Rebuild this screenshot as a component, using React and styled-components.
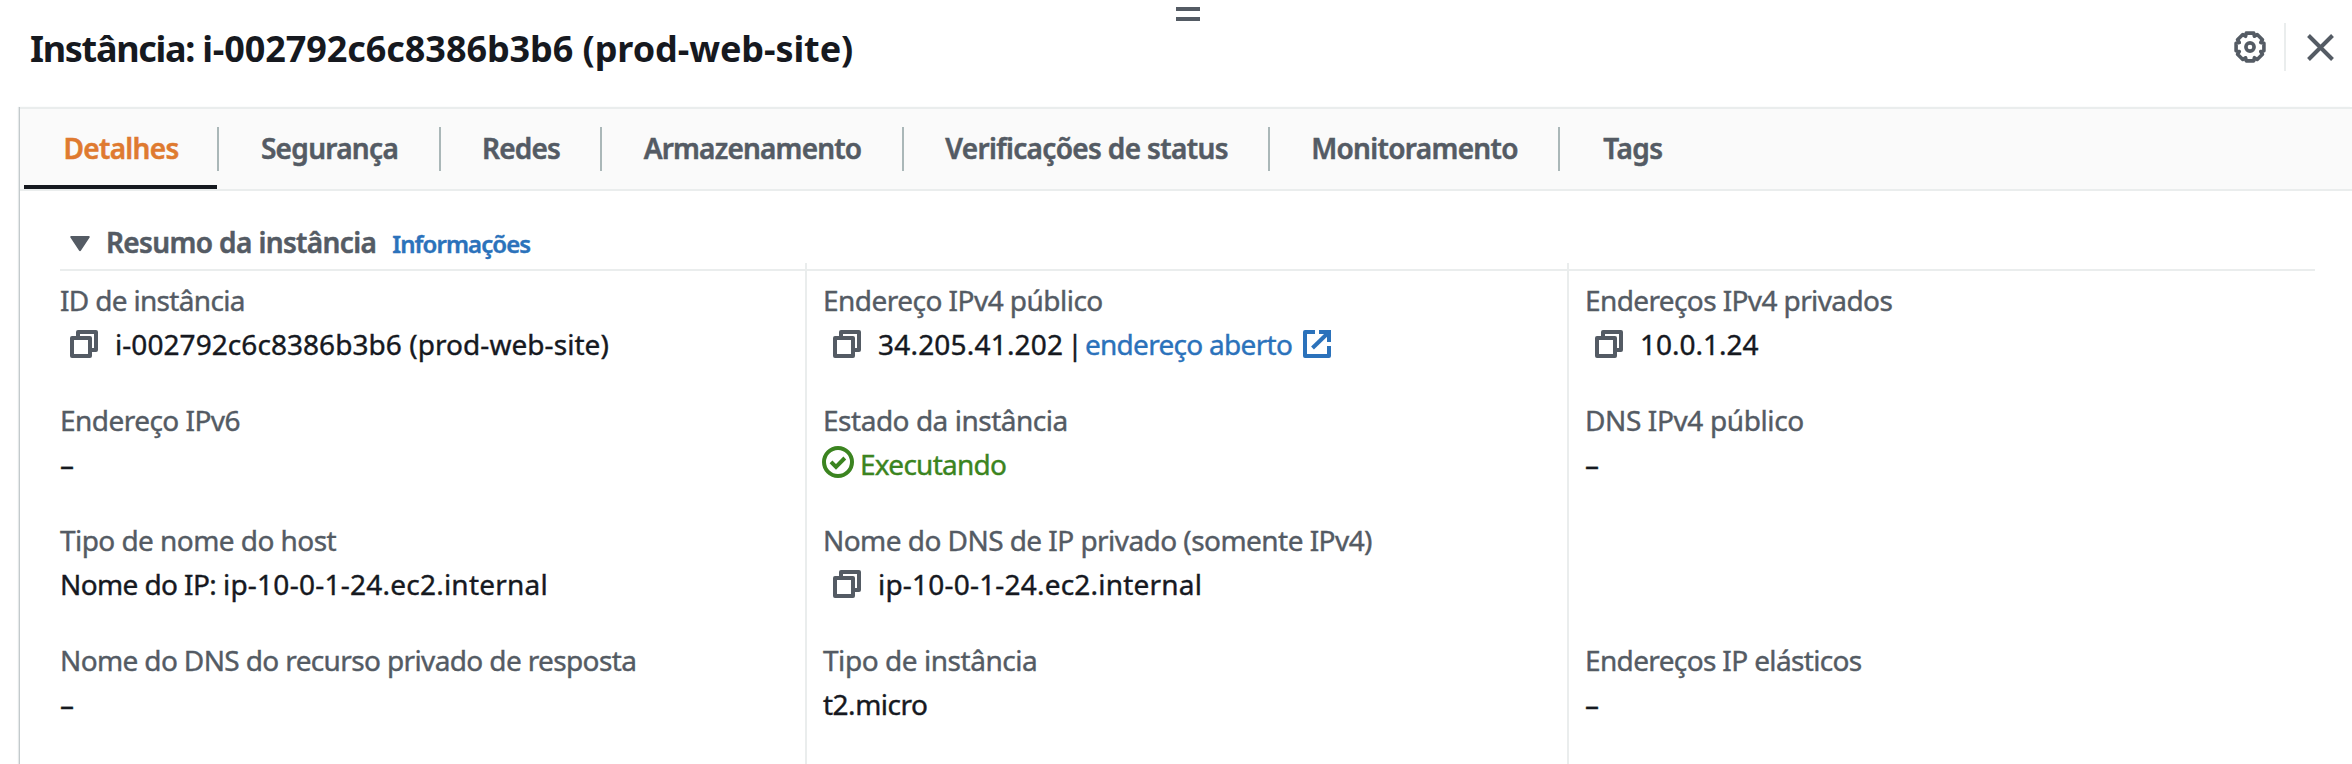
import React from 'react';
import styled, { createGlobalStyle } from 'styled-components';

const color = {
  ink: '#16191f',
  muted: '#545b64',
  link: '#2b72bb',
  accent: '#df7a30',
  success: '#3b8420',
  line: '#eaeded',
  separator: '#aab7b8',
  bar: '#fafafa',
};

const GlobalStyle = createGlobalStyle`
  * { box-sizing: border-box; }
  body {
    margin: 0;
    background: #fff;
    color: ${color.ink};
    font: 400 28px/44px "Noto Sans", "Open Sans", sans-serif;
    -webkit-text-stroke: 0.4px;
    overflow: hidden;
  }
`;

const SplitPanel = styled.section`
  display: flex;
  flex-direction: column;
  height: 764px;
  overflow: hidden;
`;

const DragHandle = styled.div`
  align-self: center;
  width: 24px;
  height: 14px;
  margin-top: 7px;
  margin-left: 24px;
  border: solid ${color.muted};
  border-width: 4px 0;
  flex: none;
`;

const Header = styled.header`
  display: flex;
  justify-content: space-between;
  align-items: center;
  height: 52px;
  padding: 0 18px 0 30px;
  flex: none;
`;

const Title = styled.h1`
  margin: 3px 0 0;
  font-size: 36px;
  font-weight: 700;
  line-height: 50px;
  letter-spacing: -0.08px;
  white-space: nowrap;
  -webkit-text-stroke: 0;
`;

const Prefix = styled.span`
  white-space: pre;
  letter-spacing: ${(p) => p.$track}px;
`;

const Actions = styled.div`
  display: flex;
  align-items: center;
`;

const ActionDivider = styled.span`
  width: 2px;
  height: 48px;
  margin: 0 21px 0 18px;
  background: ${color.line};
`;

const Icon = styled.svg`
  display: block;
  flex: none;
  width: ${(p) => p.$size}px;
  height: ${(p) => p.$size}px;
  fill: none;
  stroke: currentColor;
  color: ${(p) => p.$color || color.muted};
`;

const Panel = styled.div`
  flex: 1;
  margin: 34px 0 0 20px;
  box-shadow: -1px 0 0 #c3cacc, -2px 0 1px #e6e9ea;
  display: flex;
  flex-direction: column;
`;

const TabBar = styled.nav`
  display: flex;
  height: 84px;
  padding-left: 4px;
  background: ${color.bar};
  border: solid ${color.line};
  border-width: 2px 0;
  flex: none;
`;

const Tab = styled.a`
  display: flex;
  align-items: center;
  width: ${(p) => p.$width}px;
  height: 80px;
  border-bottom: 4px solid ${(p) => (p.$active ? color.ink : 'transparent')};
  color: ${(p) => (p.$active ? color.accent : color.muted)};
  font-weight: 600;
  letter-spacing: ${(p) => p.$track}px;
  white-space: nowrap;
  margin-right: 2px;
  -webkit-text-stroke: 0.5px;
`;

const TabLabel = styled.span`
  flex: 1;
  text-align: center;
  padding: 2px 0 0 1px;
`;

const TabSeparator = styled.span`
  width: 2px;
  height: 44px;
  margin: 18px 0 0 -2px;
  background: ${color.separator};
`;

const Summary = styled.div`
  display: flex;
  flex-direction: column;
  flex: 1;
  padding: 29px 37px 0 40px;
`;

const SummaryHeader = styled.div`
  display: flex;
  align-items: baseline;
  height: 51px;
  padding-left: 10px;
  border-bottom: 2px solid ${color.line};
  flex: none;
`;

const Caret = styled.svg`
  width: 20px;
  height: 18px;
  margin: 0 16px -1px 0;
  fill: ${color.muted};
`;

const SummaryTitle = styled.h2`
  margin: 0;
  color: ${color.muted};
  font-size: 28px;
  font-weight: 600;
  line-height: 44px;
  letter-spacing: -0.63px;
  -webkit-text-stroke: 0.5px;
`;

const InfoLink = styled.a`
  margin-left: 16px;
  color: ${color.link};
  font-size: 24px;
  font-weight: 600;
  letter-spacing: -0.93px;
`;

const Columns = styled.div`
  display: grid;
  grid-template-columns: 745px 762px 1fr;
  flex: 1;
  margin-top: -8px;
`;

const Column = styled.dl`
  display: flex;
  flex-direction: column;
  gap: 32px;
  margin: 0;
  padding: 15px 0 0 ${(p) => (p.$divided ? 16 : 0)}px;
  border-left: ${(p) => (p.$divided ? `2px solid ${color.line}` : 'none')};
`;

const Field = styled.div`
  height: 88px;
  white-space: nowrap;
`;

const Label = styled.dt`
  color: ${color.muted};
  letter-spacing: ${(p) => p.$track}px;
`;

const Value = styled.dd`
  display: flex;
  align-items: center;
  margin: 0;
  height: 44px;
  letter-spacing: ${(p) => p.$track || 0}px;
`;

const CopyButton = styled.span`
  margin: 0 17px 0 10px;
`;

const Pipe = styled.span`
  margin: 0 2px 0 4px;
`;

const OpenLink = styled.a`
  display: flex;
  align-items: center;
  gap: 11px;
  color: ${color.link};
  letter-spacing: -0.71px;
`;

const Status = styled.span`
  display: flex;
  align-items: center;
  gap: 6px;
  color: ${color.success};
  letter-spacing: -0.74px;
`;

const StatusIcon = styled(Icon)`
  margin: -4px 0 0 -1px;
`;

// Eight flat-topped teeth around the centre of a 32 x 32 box.
const gearPoints = Array.from({ length: 8 }, (_, tooth) =>
  [
    [-15, 14.4],
    [15, 14.4],
    [22.5, 11.6],
  ].map(([offset, radius]) => {
    const angle = ((tooth * 45 + offset) * Math.PI) / 180;
    return `${(16 + radius * Math.cos(angle)).toFixed(2)},${(16 + radius * Math.sin(angle)).toFixed(2)}`;
  })
)
  .flat()
  .join(' ');

function GearIcon() {
  return (
    <Icon $size={32} viewBox="0 0 32 32" strokeWidth="3.6">
      <polygon points={gearPoints} strokeLinejoin="round" />
      <circle cx="16" cy="16" r="4.1" />
    </Icon>
  );
}

function CloseIcon() {
  return (
    <Icon $size={27} viewBox="0 0 27 27" strokeWidth="4">
      <path d="M1.5 1.5l24 24M25.5 1.5l-24 24" />
    </Icon>
  );
}

function CopyIcon() {
  return (
    <CopyButton>
      <Icon $size={28} viewBox="0 0 28 28" strokeWidth="4" strokeLinejoin="round">
        <path d="M2 8h18v18H2z" />
        <path d="M8 8V2h18v18h-6" />
      </Icon>
    </CopyButton>
  );
}

function ExternalIcon() {
  return (
    <Icon $size={28} $color={color.link} viewBox="0 0 28 28" strokeWidth="4">
      <path strokeLinejoin="round" d="M12 2H2v24h24V16" />
      <path d="M16 2h10v10" />
      <path d="M25.5 2.5L9.5 18" />
    </Icon>
  );
}

function CheckIcon() {
  return (
    <StatusIcon $size={32} $color={color.success} viewBox="0 0 32 32" strokeWidth="4">
      <circle cx="16" cy="16" r="14" />
      <path d="M9 15.8l5 5L22.8 12" />
    </StatusIcon>
  );
}

const tabs = [
  { name: 'Detalhes', width: 193, track: -0.7, active: true },
  { name: 'Segurança', width: 220, track: -0.7 },
  { name: 'Redes', width: 159, track: -0.82 },
  { name: 'Armazenamento', width: 300, track: -0.82 },
  { name: 'Verificações de status', width: 364, track: -0.65 },
  { name: 'Monitoramento', width: 288, track: -0.68 },
  { name: 'Tags', width: 145, track: -0.53 },
];

const columns = [
  [
    { label: 'ID de instância', track: -0.68, value: 'i-002792c6c8386b3b6 (prod-web-site)', valueTrack: 0.06, copy: true },
    { label: 'Endereço IPv6', track: -0.54, value: '–' },
    { label: 'Tipo de nome do host', track: -0.56, prefix: 'Nome do IP: ', value: 'ip-10-0-1-24.ec2.internal', valueTrack: 0.24 },
    { label: 'Nome do DNS do recurso privado de resposta', track: -0.63, value: '–' },
  ],
  [
    { label: 'Endereço IPv4 público', track: -0.53, value: '34.205.41.202', valueTrack: 0.2, copy: true, link: 'endereço aberto' },
    { label: 'Estado da instância', track: -0.48, status: 'Executando' },
    { label: 'Nome do DNS de IP privado (somente IPv4)', track: -0.55, value: 'ip-10-0-1-24.ec2.internal', valueTrack: 0.2, copy: true },
    { label: 'Tipo de instância', track: -0.45, value: 't2.micro', valueTrack: -0.5 },
  ],
  [
    { label: 'Endereços IPv4 privados', track: -0.61, value: '10.0.1.24', valueTrack: 0, copy: true },
    { label: 'DNS IPv4 público', track: -0.38, value: '–' },
    null,
    { label: 'Endereços IP elásticos', track: -0.64, value: '–' },
  ],
];

function FieldItem({ item }) {
  if (!item) return <Field />;
  return (
    <Field>
      <Label $track={item.track}>{item.label}</Label>
      <Value $track={item.valueTrack}>
        {item.copy && <CopyIcon />}
        {item.status && (
          <Status>
            <CheckIcon />
            {item.status}
          </Status>
        )}
        {item.prefix && <Prefix $track={-0.6}>{item.prefix}</Prefix>}
        {item.value}
        {item.link && (
          <>
            <Pipe>|</Pipe>
            <OpenLink>
              {item.link}
              <ExternalIcon />
            </OpenLink>
          </>
        )}
      </Value>
    </Field>
  );
}

export default function App() {
  return (
    <>
      <GlobalStyle />
      <SplitPanel>
        <DragHandle />
        <Header>
          <Title>
            <Prefix $track={-1.3}>Instância: </Prefix>
            i-002792c6c8386b3b6 (prod-web-site)
          </Title>
          <Actions>
            <GearIcon />
            <ActionDivider />
            <CloseIcon />
          </Actions>
        </Header>
        <Panel>
          <TabBar>
            {tabs.map((tab, i) => (
              <React.Fragment key={tab.name}>
                <Tab $width={tab.width} $track={tab.track} $active={tab.active}>
                  <TabLabel>{tab.name}</TabLabel>
                </Tab>
                {i < tabs.length - 1 && <TabSeparator />}
              </React.Fragment>
            ))}
          </TabBar>
          <Summary>
            <SummaryHeader>
              <Caret viewBox="0 0 20 18">
                <path d="M1.2 1h17.6a1 1 0 0 1 .8 1.6L11 15.6a1.2 1.2 0 0 1-2 0L.4 2.6A1 1 0 0 1 1.2 1z" />
              </Caret>
              <SummaryTitle>Resumo da instância</SummaryTitle>
              <InfoLink>Informações</InfoLink>
            </SummaryHeader>
            <Columns>
              {columns.map((items, i) => (
                <Column key={i} $divided={i > 0}>
                  {items.map((item, j) => (
                    <FieldItem key={j} item={item} />
                  ))}
                </Column>
              ))}
            </Columns>
          </Summary>
        </Panel>
      </SplitPanel>
    </>
  );
}
